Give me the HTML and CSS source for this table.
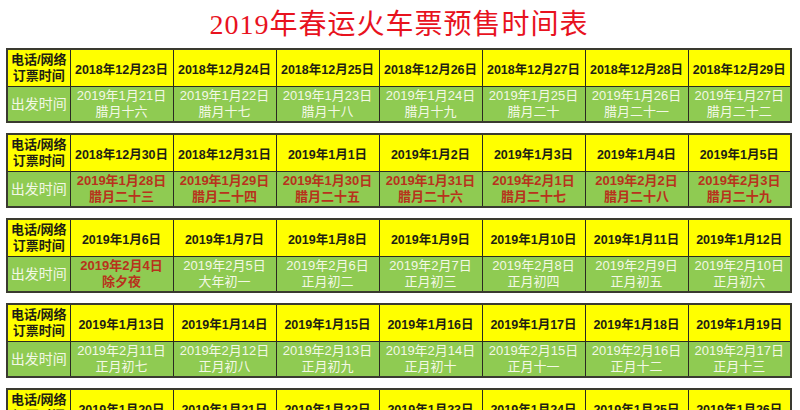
FILE: index.html
```html
<!DOCTYPE html>
<html lang="zh-CN">
<head>
<meta charset="utf-8">
<title>2019年春运火车票预售时间表</title>
<link rel="stylesheet" href="styles.css">
</head>
<body>
<div class="page">
  <h1 class="title">2019年春运火车票预售时间表</h1>

  <table class="sched">
    <colgroup><col class="c-label"><col><col><col><col><col><col><col></colgroup>
    <tr class="book">
      <th>电话/网络<br>订票时间</th>
      <td>2018年12月23日</td><td>2018年12月24日</td><td>2018年12月25日</td><td>2018年12月26日</td><td>2018年12月27日</td><td>2018年12月28日</td><td>2018年12月29日</td>
    </tr>
    <tr class="dep">
      <th>出发时间</th>
      <td>2019年1月21日<br>腊月十六</td><td>2019年1月22日<br>腊月十七</td><td>2019年1月23日<br>腊月十八</td><td>2019年1月24日<br>腊月十九</td><td>2019年1月25日<br>腊月二十</td><td>2019年1月26日<br>腊月二十一</td><td>2019年1月27日<br>腊月二十二</td>
    </tr>
  </table>

  <table class="sched">
    <colgroup><col class="c-label"><col><col><col><col><col><col><col></colgroup>
    <tr class="book">
      <th>电话/网络<br>订票时间</th>
      <td>2018年12月30日</td><td>2018年12月31日</td><td>2019年1月1日</td><td>2019年1月2日</td><td>2019年1月3日</td><td>2019年1月4日</td><td>2019年1月5日</td>
    </tr>
    <tr class="dep">
      <th>出发时间</th>
      <td class="hot">2019年1月28日<br>腊月二十三</td><td class="hot">2019年1月29日<br>腊月二十四</td><td class="hot">2019年1月30日<br>腊月二十五</td><td class="hot">2019年1月31日<br>腊月二十六</td><td class="hot">2019年2月1日<br>腊月二十七</td><td class="hot">2019年2月2日<br>腊月二十八</td><td class="hot">2019年2月3日<br>腊月二十九</td>
    </tr>
  </table>

  <table class="sched">
    <colgroup><col class="c-label"><col><col><col><col><col><col><col></colgroup>
    <tr class="book">
      <th>电话/网络<br>订票时间</th>
      <td>2019年1月6日</td><td>2019年1月7日</td><td>2019年1月8日</td><td>2019年1月9日</td><td>2019年1月10日</td><td>2019年1月11日</td><td>2019年1月12日</td>
    </tr>
    <tr class="dep">
      <th>出发时间</th>
      <td class="hot">2019年2月4日<br>除夕夜</td><td>2019年2月5日<br>大年初一</td><td>2019年2月6日<br>正月初二</td><td>2019年2月7日<br>正月初三</td><td>2019年2月8日<br>正月初四</td><td>2019年2月9日<br>正月初五</td><td>2019年2月10日<br>正月初六</td>
    </tr>
  </table>

  <table class="sched">
    <colgroup><col class="c-label"><col><col><col><col><col><col><col></colgroup>
    <tr class="book">
      <th>电话/网络<br>订票时间</th>
      <td>2019年1月13日</td><td>2019年1月14日</td><td>2019年1月15日</td><td>2019年1月16日</td><td>2019年1月17日</td><td>2019年1月18日</td><td>2019年1月19日</td>
    </tr>
    <tr class="dep">
      <th>出发时间</th>
      <td>2019年2月11日<br>正月初七</td><td>2019年2月12日<br>正月初八</td><td>2019年2月13日<br>正月初九</td><td>2019年2月14日<br>正月初十</td><td>2019年2月15日<br>正月十一</td><td>2019年2月16日<br>正月十二</td><td>2019年2月17日<br>正月十三</td>
    </tr>
  </table>

  <table class="sched">
    <colgroup><col class="c-label"><col><col><col><col><col><col><col></colgroup>
    <tr class="book">
      <th>电话/网络<br>订票时间</th>
      <td>2019年1月20日</td><td>2019年1月21日</td><td>2019年1月22日</td><td>2019年1月23日</td><td>2019年1月24日</td><td>2019年1月25日</td><td>2019年1月26日</td>
    </tr>
    <tr class="dep">
      <th>出发时间</th>
      <td>2019年2月18日<br>正月十四</td><td>2019年2月19日<br>正月十五</td><td>2019年2月20日<br>正月十六</td><td>2019年2月21日<br>正月十七</td><td>2019年2月22日<br>正月十八</td><td>2019年2月23日<br>正月十九</td><td>2019年2月24日<br>正月二十</td>
    </tr>
  </table>
</div>
</body>
</html>
```

FILE: styles.css
```css
html, body {
  margin: 0;
  padding: 0;
  background: #ffffff;
  overflow: hidden;
}

.page {
  width: 786px;
  padding: 0 8px 0 6px;
  font-family: "Liberation Sans", "Noto Sans CJK SC", sans-serif;
}

.title {
  margin: 0 0 6px 0;
  padding-top: 8px;
  height: 34px;
  line-height: 34px;
  text-align: center;
  font-family: "Liberation Serif", "Noto Sans CJK SC", serif;
  font-size: 28px;
  font-weight: normal;
  letter-spacing: 1px;
  color: #e8121e;
}

.sched {
  width: 786px;
  table-layout: fixed;
  border-collapse: collapse;
  border: 2px solid #3a3a30;
  margin-bottom: 10px;
}

.c-label {
  width: 63px;
}

.sched th,
.sched td {
  border: 1px solid #2a2a22;
  padding: 0;
  text-align: center;
  vertical-align: middle;
  font-size: 13px;
  white-space: nowrap;
}

.book th,
.book td {
  height: 36px;
  background: #ffff00;
  color: #1e1e14;
  font-weight: bold;
}

.book td {
  font-size: 12.5px;
}

.book th {
  line-height: 16px;
}

.dep th,
.dep td {
  height: 34px;
  background: #8fcb52;
  color: #f3f8e6;
  font-weight: normal;
  line-height: 16px;
}

.dep th {
  font-size: 14px;
}

.dep td.hot {
  color: #b8321c;
  font-weight: bold;
}
```
